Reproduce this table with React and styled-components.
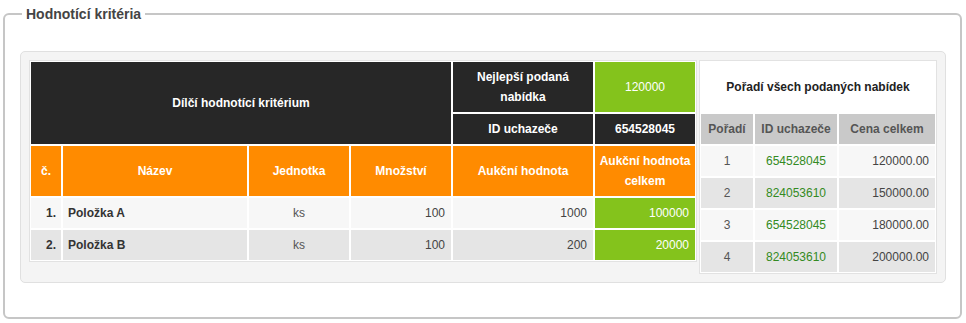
import React from "react";
import styled, { createGlobalStyle, css } from "styled-components";

const GlobalStyle = createGlobalStyle`
  html, body {
    margin: 0;
    padding: 0;
    background: #ffffff;
  }
  body {
    font-family: "Liberation Sans", Arial, sans-serif;
    font-size: 12px;
    color: #333333;
  }
  * { box-sizing: border-box; }
`;

const Page = styled.div`
  padding: 6px 0 0 3px;
`;

const Fieldset = styled.fieldset`
  margin: 0;
  width: 959px;
  min-width: 0;
  border: 2px solid #c6c6c6;
  border-radius: 6px;
  padding: 29px 14px 34px 15px;
`;

const Legend = styled.legend`
  margin-left: 2px;
  padding: 0 4px;
  font-size: 14px;
  line-height: 16px;
  font-weight: bold;
  color: #444444;
`;

const Panel = styled.div`
  display: flex;
  align-items: flex-start;
  gap: 2px;
  padding: 8px;
  background: #f4f4f4;
  border: 1px solid #e0e0e0;
  border-radius: 5px;
`;

const Grid = styled.div`
  display: grid;
  grid-template-columns: ${(p) => p.$cols};
  grid-template-rows: ${(p) => p.$rows};
  gap: 2px;
  padding: 1px;
  background: #ffffff;
  border: 1px solid #e2e2e2;
`;

const alignMap = { left: "flex-start", center: "center", right: "flex-end" };

const Cell = styled.div`
  display: flex;
  align-items: center;
  justify-content: ${(p) => alignMap[p.$align || "center"]};
  text-align: ${(p) => p.$align || "center"};
  padding: 0 6px;
  font-size: 12px;
  line-height: 20px;
  ${(p) => p.$col && css`grid-column: ${p.$col};`}
  ${(p) => p.$row && css`grid-row: ${p.$row};`}
`;

const DarkCell = styled(Cell)`
  background: #272727;
  color: #ffffff;
  font-weight: bold;
`;

const GreenCell = styled(Cell)`
  background: #84c31c;
  color: #ffffff;
`;

const OrangeCell = styled(Cell)`
  background: #ff8b00;
  color: #ffffff;
  font-weight: bold;
  padding: 0 3px;
`;

const BodyCell = styled(Cell)`
  background: ${(p) => (p.$alt ? "#e5e5e5" : "#f7f7f7")};
  color: ${(p) => p.$color || "#444444"};
  font-weight: ${(p) => (p.$bold ? "bold" : "normal")};
  padding: 0 ${(p) => (p.$tight ? "5px" : "6px")};
`;

const TitleCell = styled(Cell)`
  background: #ffffff;
  color: #222222;
  font-weight: bold;
`;

const GrayHead = styled(Cell)`
  background: #c9c9c9;
  color: #555555;
  font-weight: bold;
  padding: 0 3px;
`;

const items = [
  { n: "1.", name: "Položka A", unit: "ks", qty: 100, price: 1000, total: 100000 },
  { n: "2.", name: "Položka B", unit: "ks", qty: 100, price: 200, total: 20000 },
];

const bids = [
  { rank: 1, id: "654528045", price: "120000.00" },
  { rank: 2, id: "824053610", price: "150000.00" },
  { rank: 3, id: "654528045", price: "180000.00" },
  { rank: 4, id: "824053610", price: "200000.00" },
];

function CriteriaTable() {
  return (
    <Grid
      role="table"
      $cols="30px 184px 100px 100px 140px 100px"
      $rows="50px 30px 50px 30px 30px"
    >
      <DarkCell $col="1 / 5" $row="1 / 3">Dílčí hodnotící kritérium</DarkCell>
      <DarkCell $col="5" $row="1" style={{ padding: "0 8px" }}>
        Nejlepší podaná nabídka
      </DarkCell>
      <GreenCell $col="6" $row="1">120000</GreenCell>
      <DarkCell $col="5" $row="2">ID uchazeče</DarkCell>
      <DarkCell $col="6" $row="2">654528045</DarkCell>

      <OrangeCell>č.</OrangeCell>
      <OrangeCell>Název</OrangeCell>
      <OrangeCell>Jednotka</OrangeCell>
      <OrangeCell>Množství</OrangeCell>
      <OrangeCell>Aukční hodnota</OrangeCell>
      <OrangeCell>Aukční hodnota celkem</OrangeCell>

      {items.map((it, i) => (
        <React.Fragment key={it.n}>
          <BodyCell $alt={i % 2 === 1} $align="right" $bold $tight $color="#333333">
            {it.n}
          </BodyCell>
          <BodyCell $alt={i % 2 === 1} $align="left" $bold $tight $color="#333333">
            {it.name}
          </BodyCell>
          <BodyCell $alt={i % 2 === 1} $color="#555555">{it.unit}</BodyCell>
          <BodyCell $alt={i % 2 === 1} $align="right">{it.qty}</BodyCell>
          <BodyCell $alt={i % 2 === 1} $align="right">{it.price}</BodyCell>
          <GreenCell $align="right">{it.total}</GreenCell>
        </React.Fragment>
      ))}
    </Grid>
  );
}

function RankTable() {
  return (
    <Grid role="table" $cols="52px 82px 96px" $rows="50px repeat(5, 30px)">
      <TitleCell $col="1 / 4">Pořadí všech podaných nabídek</TitleCell>
      <GrayHead>Pořadí</GrayHead>
      <GrayHead>ID uchazeče</GrayHead>
      <GrayHead>Cena celkem</GrayHead>
      {bids.map((b, i) => (
        <React.Fragment key={b.rank}>
          <BodyCell $alt={i % 2 === 1} $color="#555555">{b.rank}</BodyCell>
          <BodyCell $alt={i % 2 === 1} $color="#338a22">{b.id}</BodyCell>
          <BodyCell $alt={i % 2 === 1} $align="right">{b.price}</BodyCell>
        </React.Fragment>
      ))}
    </Grid>
  );
}

export default function App() {
  return (
    <>
      <GlobalStyle />
      <Page>
        <Fieldset>
          <Legend>Hodnotící kritéria</Legend>
          <Panel>
            <CriteriaTable />
            <RankTable />
          </Panel>
        </Fieldset>
      </Page>
    </>
  );
}
